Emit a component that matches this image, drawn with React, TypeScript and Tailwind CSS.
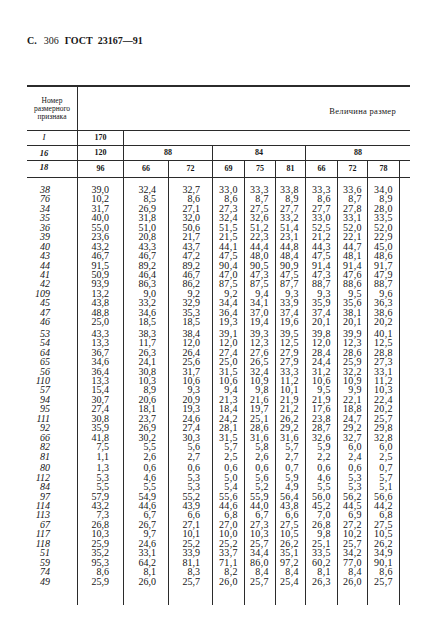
import React from 'react';

const GRID = 'grid grid-cols-[50px_46px_45px_44px_32px_31px_30px_32px_30px_32px_11px]';

type Row = [string, string[]];

const rows: Row[] = [
  ['38', ['39,0', '32,4', '32,7', '33,0', '33,3', '33,8', '33,3', '33,6', '34,0']],
  ['76', ['10,2', '8,5', '8,6', '8,6', '8,7', '8,9', '8,6', '8,7', '8,9']],
  ['34', ['31,7', '26,9', '27,1', '27,3', '27,5', '27,7', '27,7', '27,8', '28,0']],
  ['35', ['40,0', '31,8', '32,0', '32,4', '32,6', '33,2', '33,0', '33,1', '33,5']],
  ['36', ['55,0', '51,0', '50,6', '51,5', '51,2', '51,4', '52,5', '52,0', '52,0']],
  ['39', ['23,6', '20,8', '21,7', '21,5', '22,3', '23,1', '21,2', '22,1', '22,9']],
  ['40', ['43,2', '43,3', '43,7', '44,1', '44,4', '44,8', '44,3', '44,7', '45,0']],
  ['43', ['46,7', '46,7', '47,2', '47,5', '48,0', '48,4', '47,5', '48,1', '48,6']],
  ['44', ['91,5', '89,2', '89,2', '90,4', '90,5', '90,9', '91,4', '91,4', '91,7']],
  ['41', ['50,9', '46,4', '46,7', '47,0', '47,3', '47,5', '47,3', '47,6', '47,9']],
  ['42', ['93,9', '86,3', '86,2', '87,5', '87,5', '87,7', '88,7', '88,6', '88,7']],
  ['109', ['13,2', '9,0', '9,2', '9,2', '9,4', '9,3', '9,3', '9,5', '9,6']],
  ['45', ['43,8', '33,2', '32,9', '34,4', '34,1', '33,9', '35,9', '35,6', '36,3']],
  ['47', ['48,8', '34,6', '35,3', '36,4', '37,0', '37,4', '37,4', '38,1', '38,6']],
  ['46', ['25,0', '18,5', '18,5', '19,3', '19,4', '19,6', '20,1', '20,1', '20,2']],
  ['53', ['43,3', '38,3', '38,4', '39,1', '39,3', '39,5', '39,8', '39,9', '40,1']],
  ['54', ['13,3', '11,7', '12,0', '12,0', '12,3', '12,5', '12,0', '12,3', '12,5']],
  ['64', ['36,7', '26,3', '26,4', '27,4', '27,6', '27,9', '28,4', '28,6', '28,8']],
  ['65', ['34,6', '24,1', '25,6', '25,0', '26,5', '27,9', '24,4', '25,9', '27,3']],
  ['56', ['36,4', '30,8', '31,7', '31,5', '32,4', '33,3', '31,2', '32,2', '33,1']],
  ['110', ['13,3', '10,3', '10,6', '10,6', '10,9', '11,2', '10,6', '10,9', '11,2']],
  ['57', ['15,4', '8,9', '9,3', '9,4', '9,8', '10,1', '9,5', '9,9', '10,3']],
  ['94', ['30,7', '20,6', '20,9', '21,3', '21,6', '21,9', '21,9', '22,1', '22,4']],
  ['95', ['27,4', '18,1', '19,3', '18,4', '19,7', '21,2', '17,6', '18,8', '20,2']],
  ['111', ['30,8', '23,7', '24,6', '24,2', '25,1', '26,2', '23,8', '24,7', '25,7']],
  ['92', ['35,9', '26,9', '27,4', '28,1', '28,6', '29,2', '28,7', '29,2', '29,8']],
  ['66', ['41,8', '30,2', '30,3', '31,5', '31,6', '31,6', '32,6', '32,7', '32,8']],
  ['82', ['7,5', '5,5', '5,6', '5,7', '5,8', '5,7', '5,9', '6,0', '6,0']],
  ['81', ['1,1', '2,6', '2,7', '2,5', '2,6', '2,7', '2,2', '2,4', '2,5']],
  ['80', ['1,3', '0,6', '0,6', '0,6', '0,6', '0,7', '0,6', '0,6', '0,7']],
  ['112', ['5,3', '4,6', '5,3', '5,0', '5,6', '5,9', '4,6', '5,3', '5,7']],
  ['84', ['5,5', '5,5', '5,3', '5,4', '5,2', '4,9', '5,5', '5,3', '5,1']],
  ['97', ['57,9', '54,9', '55,2', '55,6', '55,9', '56,4', '56,0', '56,2', '56,6']],
  ['114', ['43,2', '44,6', '43,9', '44,6', '44,0', '43,8', '45,2', '44,5', '44,2']],
  ['113', ['7,3', '6,7', '6,6', '6,8', '6,7', '6,6', '7,0', '6,9', '6,8']],
  ['67', ['26,8', '26,7', '27,1', '27,0', '27,3', '27,5', '26,8', '27,2', '27,5']],
  ['117', ['10,3', '9,7', '10,1', '10,0', '10,3', '10,5', '9,8', '10,2', '10,5']],
  ['118', ['25,9', '24,6', '25,2', '25,2', '25,7', '26,2', '25,1', '25,7', '26,2']],
  ['51', ['35,2', '33,1', '33,9', '33,7', '34,4', '35,1', '33,5', '34,2', '34,9']],
  ['59', ['95,3', '64,2', '81,1', '71,1', '86,0', '97,2', '60,2', '77,0', '90,1']],
  ['74', ['8,6', '8,1', '8,3', '8,2', '8,4', '8,4', '8,1', '8,4', '8,6']],
  ['49', ['25,9', '26,0', '25,7', '26,0', '25,7', '25,4', '26,3', '26,0', '25,7']],
];

// rows that start a new block in the printed table (small extra gap above)
const blockStarts = ['53', '80'];

const valuePad = ['pr-[14px]', 'pr-[12px]', 'pr-[12px]', 'pr-[6px]', 'pr-[6px]', 'pr-[6px]', 'pr-[6px]', 'pr-[5px]', 'pr-[6px]'];
const sizes = ['96', '66', '72', '69', '75', '81', '66', '72', '78'];

const line = 'border-[#2b2b2b]';

const App: React.FC = () => {
  return (
    <div className="w-[425px] h-[633px] bg-white text-[#161616] font-['Liberation_Serif',serif] pl-[27px] pt-[35px]">
      <div className="flex items-baseline text-[10px] leading-[12px] h-[12px]">
        <span className="font-bold">С.</span>
        <span className="ml-[7px]">306</span>
        <span className="ml-[6px] font-bold">ГОСТ</span>
        <span className="ml-[5px] font-bold">23167—91</span>
      </div>

      <div className={`w-[383px] mt-[38px] border-t-2 ${line}`}>
        {/* header */}
        <div className={GRID}>
          <div className={`h-[44px] border-b ${line} flex items-center justify-center text-center text-[7.5px] leading-[8px]`}>
            Номер<br />размерного<br />признака
          </div>
          <div className={`col-span-10 h-[44px] border-l border-b ${line} flex items-center justify-end pr-[14px] pt-[6px] text-[8.5px] tracking-[0.3px]`}>
            Величина размер
          </div>

          <div className={`h-[15px] border-b ${line} flex items-center justify-center pr-[16px] italic text-[9px]`}>I</div>
          <div className={`h-[15px] border-l border-b ${line} flex items-center justify-center font-bold text-[8px]`}>170</div>
          <div className={`col-span-9 h-[15px] border-l border-b ${line}`} />

          <div className={`h-[15px] border-b ${line} flex items-center justify-center pr-[16px] italic font-bold text-[8.5px]`}>16</div>
          <div className={`h-[15px] border-l border-b ${line} flex items-center justify-center font-bold text-[8px]`}>120</div>
          <div className={`col-span-2 h-[15px] border-l border-b ${line} flex items-center justify-center font-bold text-[8px]`}>88</div>
          <div className={`col-span-3 h-[15px] border-l border-b ${line} flex items-center justify-center font-bold text-[8px]`}>84</div>
          <div className={`col-span-4 h-[15px] border-l border-b ${line} flex items-center justify-center font-bold text-[8px]`}>88</div>

          <div className={`h-[17px] border-b ${line} flex items-center justify-center pr-[16px] pb-[3px] italic font-bold text-[8.5px]`}>18</div>
          {sizes.map((s, i) => (
            <div key={i} className={`h-[17px] border-l border-b ${line} flex items-center justify-center font-bold text-[8px]`}>
              {s}
            </div>
          ))}
          <div className={`h-[17px] border-l border-b ${line}`} />
        </div>

        {/* body */}
        <div className={`${GRID} h-[427px]`}>
          <div className="flex flex-col pt-[7px] pr-[27px] text-right italic text-[10px] leading-[9.45px]">
            {rows.map(([label]) => (
              <div key={label} className={`h-[9.45px] ${blockStarts.includes(label) ? 'mt-[2.3px]' : ''}`}>
                {label}
              </div>
            ))}
          </div>
          {sizes.map((_, c) => (
            <div
              key={c}
              className={`border-l ${line} flex flex-col pt-[7px] text-right text-[10px] leading-[9.45px] ${valuePad[c]} ${c > 2 ? 'tracking-[0.4px]' : ''}`}
            >
              {rows.map(([label, vals]) => (
                <div key={label} className={`h-[9.45px] ${blockStarts.includes(label) ? 'mt-[2.3px]' : ''}`}>
                  {vals[c]}
                </div>
              ))}
            </div>
          ))}
          <div className={`border-l ${line}`} />
        </div>
      </div>
    </div>
  );
};

export default App;
